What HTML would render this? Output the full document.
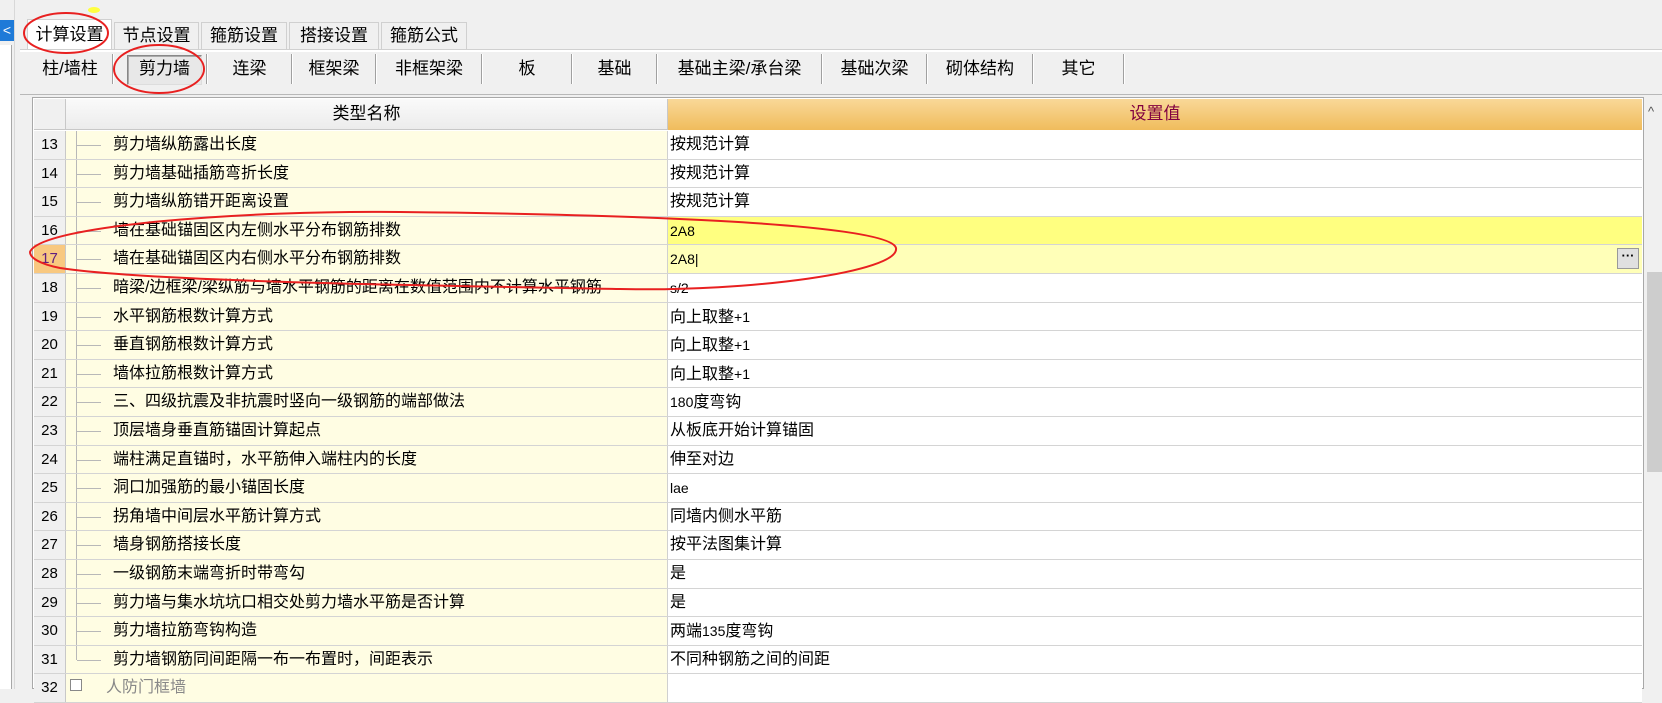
<!DOCTYPE html>
<html><head><meta charset="utf-8"><style>
*{margin:0;padding:0;box-sizing:border-box}
body{width:1662px;height:689px;overflow:hidden;background:#f0f0f0;font-family:"Liberation Sans","Noto Sans CJK SC","WenQuanYi Zen Hei",sans-serif;font-size:16px;color:#000;position:relative}
.a{position:absolute}
.tab{position:absolute;top:22px;height:27px;border:1px solid #d0d0d0;border-bottom:none;background:#f0f0f0;text-align:center;line-height:26px;font-size:17px}
.st{position:absolute;top:52px;height:36px;line-height:34px;font-size:17px;text-align:center}
.sep{position:absolute;top:54px;width:2px;height:30px;border-left:1px solid #a0a0a0;border-right:1px solid #fff}
.row{position:absolute;left:34px;width:1608px;height:28.6px;border-bottom:1px solid #d4d4d4}
.num{position:absolute;left:0;top:0;width:32px;height:100%;background:#f0f0f0;border-right:1px solid #c8c8c8;text-align:center;line-height:28px;font-size:15px}
.nm{position:absolute;left:32px;top:0;width:602px;height:100%;background:#fffde3;border-right:1px solid #d0d0d0;line-height:28px;white-space:nowrap;overflow:hidden}
.nm .v{position:absolute;left:10px;top:0;width:1px;height:100%;background:#b8b8b8}
.nm .h{position:absolute;left:11px;top:14px;width:24px;height:1px;background:#b8b8b8}
.nm span{position:absolute;left:47px;top:0}
.val{position:absolute;left:634px;top:0;right:0;height:100%;background:#fff;line-height:28px;padding-left:2px;white-space:nowrap}
.sm{font-size:14px}
</style></head><body>
<div class="a" style="left:0;top:20px;width:14px;height:21px;background:#1e7ad8;color:#fff;font-size:14px;line-height:20px;text-align:center">&lt;</div>
<div class="a" style="left:0;top:45px;width:12px;height:644px;background:#fff;border-right:1px solid #a8a8a8"></div>
<div class="a" style="left:14px;top:0;width:1px;height:689px;background:#d8d8d8"></div>
<div class="a" style="left:88px;top:7px;width:12px;height:6px;border-radius:50%;background:#ffff40"></div>
<div class="tab" style="left:27px;width:85px;top:19px;height:31px;background:#fff;line-height:30px">计算设置</div>
<div class="tab" style="left:114px;width:85px">节点设置</div>
<div class="tab" style="left:201px;width:86px">箍筋设置</div>
<div class="tab" style="left:289px;width:90px">搭接设置</div>
<div class="tab" style="left:381px;width:86px">箍筋公式</div>
<div class="a" style="left:20px;top:49px;width:1642px;height:1px;background:#d0d0d0"></div>
<div class="a" style="left:20px;top:50px;width:1642px;height:2px;background:#fff"></div>
<div class="st" style="left:30px;width:80px">柱/墙柱</div>
<div class="a" style="left:127px;top:55px;width:75px;height:30px;border:1px solid #888;border-right-color:#ddd;border-bottom-color:#ddd;background:#e8e8e8;box-shadow:inset 1px 1px 0 #aaa"></div>
<div class="st" style="left:127px;width:75px">剪力墙</div>
<div class="st" style="left:207px;width:85px">连梁</div>
<div class="st" style="left:292px;width:84px">框架梁</div>
<div class="st" style="left:376px;width:106px">非框架梁</div>
<div class="st" style="left:482px;width:90px">板</div>
<div class="st" style="left:572px;width:85px">基础</div>
<div class="st" style="left:657px;width:165px">基础主梁/承台梁</div>
<div class="st" style="left:822px;width:105px">基础次梁</div>
<div class="st" style="left:927px;width:106px">砌体结构</div>
<div class="st" style="left:1033px;width:91px">其它</div>
<div class="sep" style="left:112px"></div><div class="sep" style="left:206px"></div><div class="sep" style="left:291px"></div><div class="sep" style="left:375px"></div><div class="sep" style="left:481px"></div><div class="sep" style="left:571px"></div><div class="sep" style="left:656px"></div><div class="sep" style="left:821px"></div><div class="sep" style="left:926px"></div><div class="sep" style="left:1032px"></div><div class="sep" style="left:1123px"></div>
<div class="a" style="left:20px;top:94px;width:1642px;height:1px;background:#b8b8b8"></div>
<div class="a" style="left:32px;top:97px;width:1612px;height:592px;border:1px solid #a8a8a8;background:#fff"></div>
<div class="a" style="left:34px;top:99px;width:32px;height:31px;background:#f0f0f0;border-right:1px solid #c8c8c8;border-bottom:1px solid #c8c8c8"></div>
<div class="a" style="left:66px;top:99px;width:602px;height:31px;background:linear-gradient(#fafafa,#ececec);border-right:1px solid #c8c8c8;border-bottom:1px solid #c8c8c8;text-align:center;line-height:30px;font-size:17px">类型名称</div>
<div class="a" style="left:668px;top:99px;width:974px;height:31px;background:linear-gradient(#f9d898,#f0bc5c);text-align:center;line-height:30px;font-size:17px;color:#800040">设置值</div>
<div class="a" style="left:1645px;top:97px;width:17px;height:592px;background:#f0f0f0"></div>
<div class="a" style="left:1647px;top:272px;width:15px;height:200px;background:#cdcdcd"></div>
<div class="a" style="left:1648px;top:104px;font-size:13px;color:#555">^</div>
<div class="row" style="top:131.0px"><div class="num">13</div><div class="nm"><i class="v"></i><i class="h"></i><span>剪力墙纵筋露出长度</span></div><div class="val">按规范计算</div></div>
<div class="row" style="top:159.6px"><div class="num">14</div><div class="nm"><i class="v"></i><i class="h"></i><span>剪力墙基础插筋弯折长度</span></div><div class="val">按规范计算</div></div>
<div class="row" style="top:188.2px"><div class="num">15</div><div class="nm"><i class="v"></i><i class="h"></i><span>剪力墙纵筋错开距离设置</span></div><div class="val">按规范计算</div></div>
<div class="row" style="top:216.8px"><div class="num">16</div><div class="nm"><i class="v"></i><i class="h"></i><span>墙在基础锚固区内左侧水平分布钢筋排数</span></div><div class="val sm" style="background:#ffff80">2A8</div></div>
<div class="row" style="top:245.4px"><div class="num" style="background:#f8c880;color:#602080">17</div><div class="nm"><i class="v"></i><i class="h"></i><span>墙在基础锚固区内右侧水平分布钢筋排数</span></div><div class="val sm" style="background:#ffffb8">2A8|<div class="a" style="right:3px;top:3px;width:22px;height:21px;border:1px solid #999;background:#e0e0e0;line-height:14px;text-align:center;font-weight:bold;font-size:13px">···</div></div></div>
<div class="row" style="top:274.0px"><div class="num">18</div><div class="nm"><i class="v"></i><i class="h"></i><span>暗梁/边框梁/梁纵筋与墙水平钢筋的距离在数值范围内不计算水平钢筋</span></div><div class="val sm">s/2</div></div>
<div class="row" style="top:302.6px"><div class="num">19</div><div class="nm"><i class="v"></i><i class="h"></i><span>水平钢筋根数计算方式</span></div><div class="val">向上取整<span class="sm">+1</span></div></div>
<div class="row" style="top:331.2px"><div class="num">20</div><div class="nm"><i class="v"></i><i class="h"></i><span>垂直钢筋根数计算方式</span></div><div class="val">向上取整<span class="sm">+1</span></div></div>
<div class="row" style="top:359.8px"><div class="num">21</div><div class="nm"><i class="v"></i><i class="h"></i><span>墙体拉筋根数计算方式</span></div><div class="val">向上取整<span class="sm">+1</span></div></div>
<div class="row" style="top:388.4px"><div class="num">22</div><div class="nm"><i class="v"></i><i class="h"></i><span>三、四级抗震及非抗震时竖向一级钢筋的端部做法</span></div><div class="val"><span class="sm">180</span>度弯钩</div></div>
<div class="row" style="top:417.0px"><div class="num">23</div><div class="nm"><i class="v"></i><i class="h"></i><span>顶层墙身垂直筋锚固计算起点</span></div><div class="val">从板底开始计算锚固</div></div>
<div class="row" style="top:445.6px"><div class="num">24</div><div class="nm"><i class="v"></i><i class="h"></i><span>端柱满足直锚时，水平筋伸入端柱内的长度</span></div><div class="val">伸至对边</div></div>
<div class="row" style="top:474.2px"><div class="num">25</div><div class="nm"><i class="v"></i><i class="h"></i><span>洞口加强筋的最小锚固长度</span></div><div class="val sm">lae</div></div>
<div class="row" style="top:502.8px"><div class="num">26</div><div class="nm"><i class="v"></i><i class="h"></i><span>拐角墙中间层水平筋计算方式</span></div><div class="val">同墙内侧水平筋</div></div>
<div class="row" style="top:531.4px"><div class="num">27</div><div class="nm"><i class="v"></i><i class="h"></i><span>墙身钢筋搭接长度</span></div><div class="val">按平法图集计算</div></div>
<div class="row" style="top:560.0px"><div class="num">28</div><div class="nm"><i class="v"></i><i class="h"></i><span>一级钢筋末端弯折时带弯勾</span></div><div class="val">是</div></div>
<div class="row" style="top:588.6px"><div class="num">29</div><div class="nm"><i class="v"></i><i class="h"></i><span>剪力墙与集水坑坑口相交处剪力墙水平筋是否计算</span></div><div class="val">是</div></div>
<div class="row" style="top:617.2px"><div class="num">30</div><div class="nm"><i class="v"></i><i class="h"></i><span>剪力墙拉筋弯钩构造</span></div><div class="val">两端<span class="sm">135</span>度弯钩</div></div>
<div class="row" style="top:645.8px"><div class="num">31</div><div class="nm"><i class="v" style="height:50%"></i><i class="h"></i><span>剪力墙钢筋同间距隔一布一布置时，间距表示</span></div><div class="val">不同种钢筋之间的间距</div></div>
<div class="row" style="top:674.4px"><div class="num">32</div><div class="nm"><i class="a" style="left:4px;top:5px;width:12px;height:12px;border:1px solid #888;background:#fff"></i><span style="left:40px;color:#888">人防门框墙</span></div><div class="val"></div></div>
<svg class="a" style="left:0;top:0" width="1662" height="689">
<g fill="none" stroke="#e82020" stroke-width="2">
<ellipse cx="66" cy="33" rx="42" ry="20"/>
<ellipse cx="159" cy="69" rx="45" ry="24"/>
<path d="M30,252 C40,225 250,210 400,212 C600,214 890,222 896,248 C900,272 750,292 620,289 C450,286 150,282 60,268 C40,264 30,258 30,252 Z"/>
</g></svg>
</body></html>
